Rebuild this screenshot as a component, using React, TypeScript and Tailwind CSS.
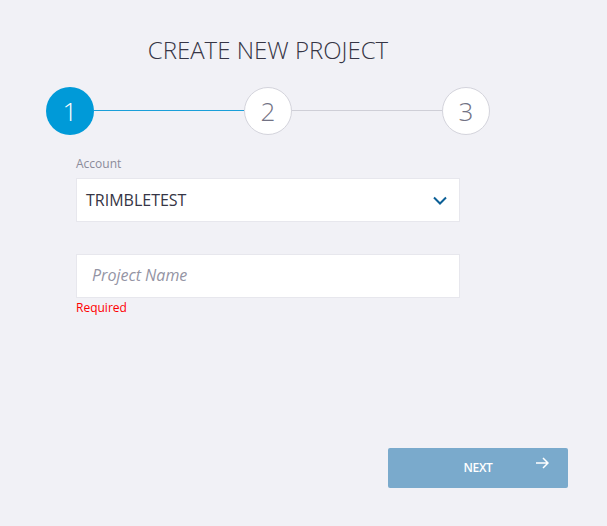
import React from 'react';

function Step({ n, active }: { n: number; active?: boolean }) {
  return (
    <div
      className={
        active
          ? 'w-[48px] h-[48px] shrink-0 rounded-full bg-[#009ad8] flex items-center justify-center text-white text-[26px] font-light'
          : 'w-[48px] h-[48px] shrink-0 rounded-full bg-white border border-[#d4d4dc] flex items-center justify-center text-[#727284] text-[26px] font-light'
      }
    >
      {n}
    </div>
  );
}

export default function App() {
  return (
    <div className="w-[607px] h-[526px] bg-[#f1f1f6] font-['Open_Sans',sans-serif] pt-[34px]">
      {/* Header + stepper */}
      <div className="ml-[46px] w-[444px]">
        <h1 className="text-center text-[24px] leading-[32px] font-light text-[#363545]">
          CREATE NEW PROJECT
        </h1>
        <div className="mt-[21px] flex items-start">
          <Step n={1} active />
          <div className="flex-1 mt-[23px] h-[1px] bg-[#1a9fd9]"></div>
          <Step n={2} />
          <div className="flex-1 mt-[23px] h-[1px] bg-[#cfcfd7]"></div>
          <Step n={3} />
        </div>
      </div>

      {/* Form */}
      <div className="ml-[76px] w-[384px] mt-[21px]">
        <label className="block text-[12px] leading-[16px] text-[#8b8b9a]">Account</label>
        <div className="mt-[6px] h-[44px] bg-white border border-[#e7e7ed] flex items-center justify-between pl-[9px] pr-[12px]">
          <span className="text-[16px] text-[#363545]">TRIMBLETEST</span>
          <svg width="14" height="9" viewBox="0 0 14 9" fill="none">
            <path d="M1 1.5L7 7.5L13 1.5" stroke="#0b5f96" strokeWidth="2" />
          </svg>
        </div>

        <input
          placeholder="Project Name"
          className="mt-[32px] block w-full h-[44px] bg-white border border-[#e7e7ed] pl-[15px] pb-[3px] text-[16px] outline-none placeholder:italic placeholder:text-[#9494a4]"
        />
        <div className="mt-[2px] text-[12px] leading-[16px] text-[#ff0000]">Required</div>
      </div>

      {/* Footer */}
      <div className="mt-[132px] flex justify-end pr-[39px]">
        <button className="relative w-[180px] h-[40px] rounded-[2px] bg-[#7aaacc] text-white text-[12px] font-semibold tracking-[-0.3px]">
          NEXT
          <svg
            className="absolute right-[19px] top-[9px]"
            width="14"
            height="12"
            viewBox="0 0 14 12"
            fill="none"
          >
            <path d="M1 6H13M8 1L13 6L8 11" stroke="white" strokeWidth="1.5" />
          </svg>
        </button>
      </div>
    </div>
  );
}
